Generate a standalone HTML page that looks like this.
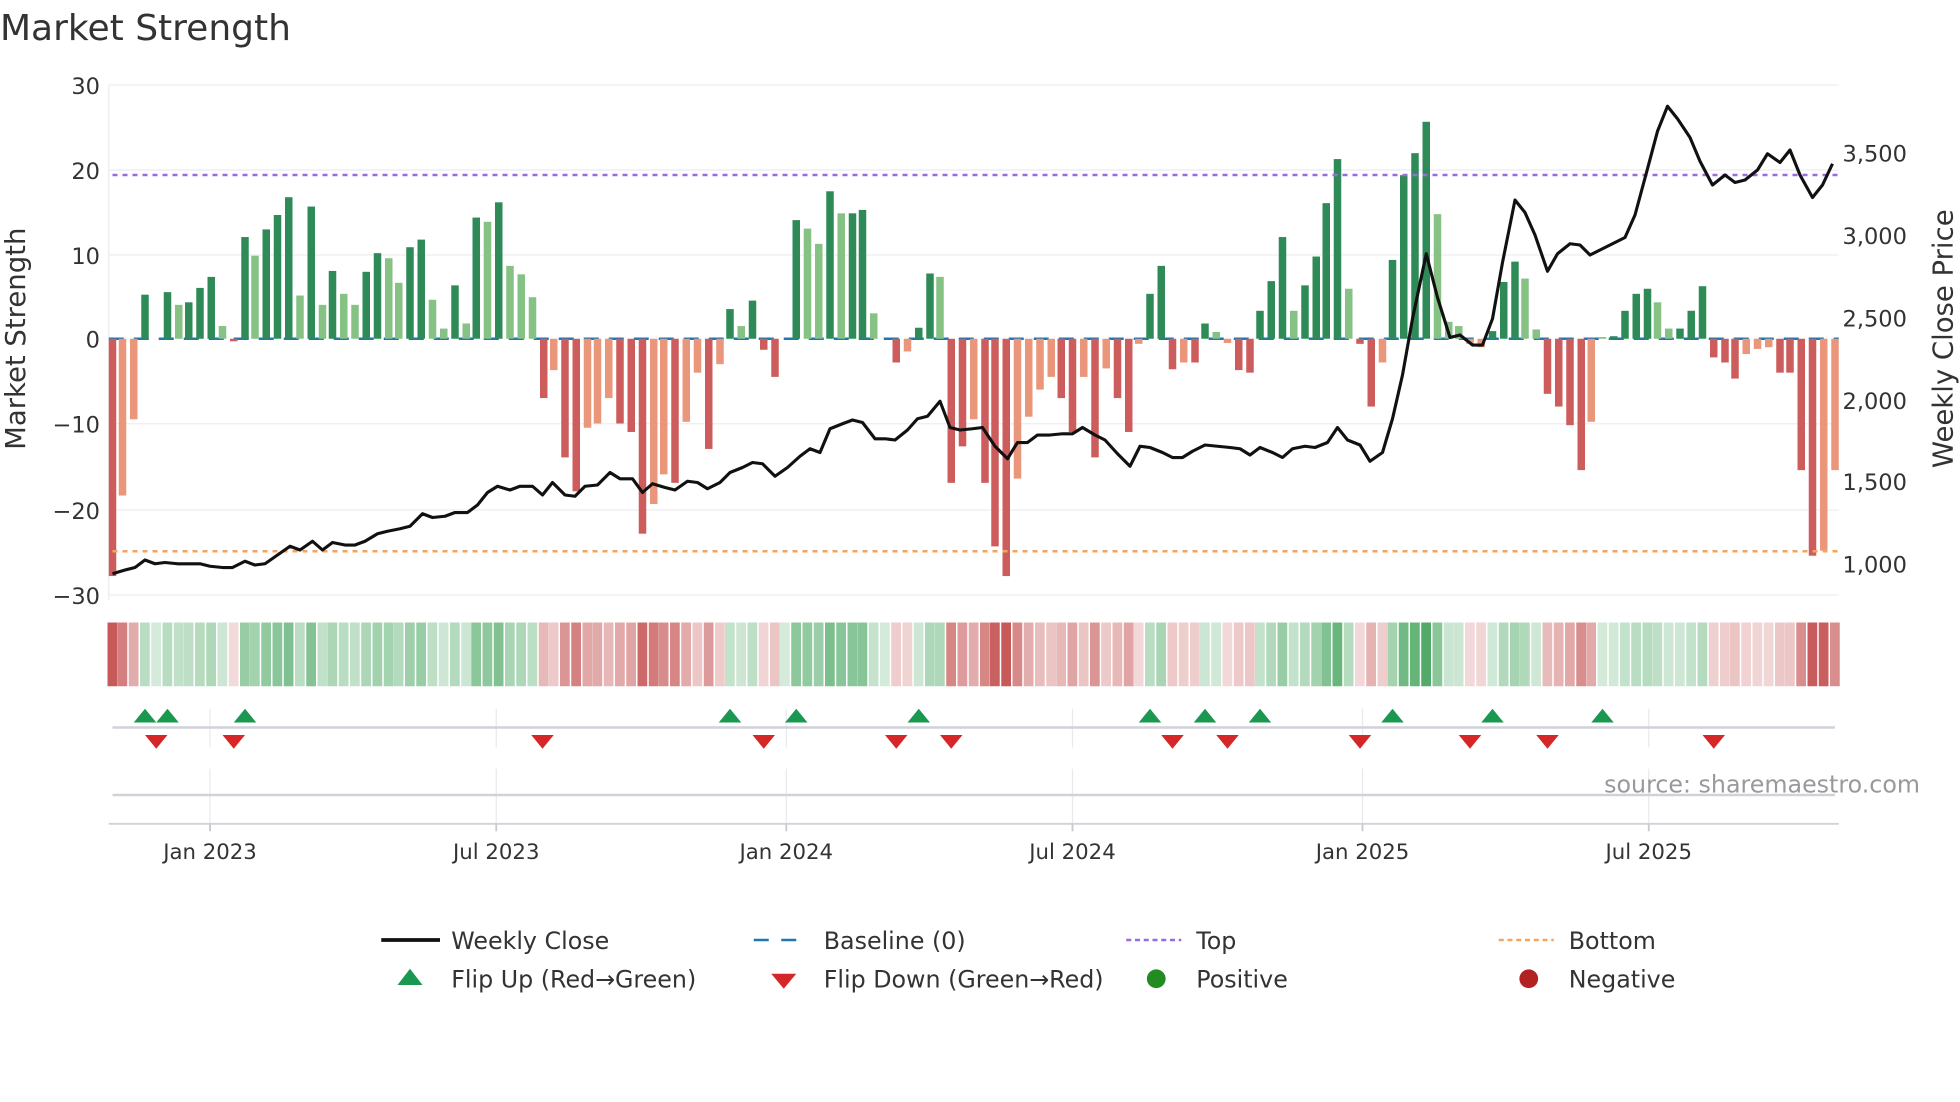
<!DOCTYPE html>
<html><head><meta charset="utf-8"><style>
html,body{margin:0;padding:0;background:#fff;width:1960px;height:1102px;overflow:hidden}
svg{display:block}
text{font-family:"DejaVu Sans","Liberation Sans",sans-serif;fill:#333}
</style></head><body>
<svg id="s" width="1960" height="1102" viewBox="0 0 1568 881.6" xmlns="http://www.w3.org/2000/svg">
<text x="0" y="32" font-size="28.8">Market Strength</text>
<g stroke="#eceef4" stroke-width="1">
<line x1="87" y1="68" x2="1471" y2="68"/><line x1="87" y1="136" x2="1471" y2="136"/><line x1="87" y1="204" x2="1471" y2="204"/>
<line x1="87" y1="339" x2="1471" y2="339"/><line x1="87" y1="408" x2="1471" y2="408"/><line x1="87" y1="476" x2="1471" y2="476"/>
<line x1="87" y1="68" x2="87" y2="480"/>
</g>
<g font-size="18" text-anchor="end">
<text x="80" y="75">30</text><text x="80" y="143">20</text><text x="80" y="211">10</text><text x="80" y="278">0</text>
<text x="80" y="346">−10</text><text x="80" y="415">−20</text><text x="80" y="483">−30</text>
</g>
<g font-size="18">
<text x="1474" y="129">3,500</text><text x="1474" y="195">3,000</text><text x="1474" y="261">2,500</text>
<text x="1474" y="327">2,000</text><text x="1474" y="392">1,500</text><text x="1474" y="458">1,000</text>
</g>
<text font-size="22" text-anchor="middle" transform="translate(20,271) rotate(-90)">Market Strength</text>
<text font-size="22" text-anchor="middle" transform="translate(1562,271) rotate(-90)">Weekly Close Price</text>
<line x1="87" y1="271" x2="1471" y2="271" stroke="#1f77b4" stroke-width="2" stroke-dasharray="12,8"/>
<g id="bars"></g>
<line x1="90" y1="140" x2="1471" y2="140" stroke="#9b6ade" stroke-width="2" stroke-dasharray="4,4"/>
<line x1="90" y1="441" x2="1471" y2="441" stroke="#f4a460" stroke-width="2" stroke-dasharray="4,4"/>
<polyline id="price" fill="none" stroke="#111" stroke-width="2.5" stroke-linejoin="round"/>
<g id="heat"></g>
<g stroke="#e8eaf0" stroke-width="1">
<line x1="168" y1="567" x2="168" y2="598"/><line x1="397" y1="567" x2="397" y2="598"/><line x1="629" y1="567" x2="629" y2="598"/><line x1="858" y1="567" x2="858" y2="598"/><line x1="1090" y1="567" x2="1090" y2="598"/><line x1="1319" y1="567" x2="1319" y2="598"/>
<line x1="168" y1="615" x2="168" y2="659"/><line x1="397" y1="615" x2="397" y2="659"/><line x1="629" y1="615" x2="629" y2="659"/><line x1="858" y1="615" x2="858" y2="659"/><line x1="1090" y1="615" x2="1090" y2="659"/><line x1="1319" y1="615" x2="1319" y2="659"/>
</g>
<line x1="90" y1="582" x2="1468" y2="582" stroke="#d0d2d8" stroke-width="2"/>
<line x1="90" y1="636" x2="1468" y2="636" stroke="#d0d2d8" stroke-width="2"/>
<line x1="87" y1="659" x2="1471" y2="659" stroke="#d0d2d8" stroke-width="1.5"/>
<g stroke="#c8cad0" stroke-width="1.5">
<line x1="168" y1="659" x2="168" y2="665"/><line x1="397" y1="659" x2="397" y2="665"/><line x1="629" y1="659" x2="629" y2="665"/><line x1="858" y1="659" x2="858" y2="665"/><line x1="1090" y1="659" x2="1090" y2="665"/><line x1="1319" y1="659" x2="1319" y2="665"/>
</g>
<g id="flips"></g>
<text x="1536" y="634" font-size="19" text-anchor="end" style="fill:#999">source: sharemaestro.com</text>
<g font-size="17" text-anchor="middle">
<text x="168" y="687">Jan 2023</text><text x="397" y="687">Jul 2023</text><text x="629" y="687">Jan 2024</text>
<text x="858" y="687">Jul 2024</text><text x="1090" y="687">Jan 2025</text><text x="1319" y="687">Jul 2025</text>
</g>
<g font-size="19">
<line x1="305" y1="752" x2="352" y2="752" stroke="#111" stroke-width="3"/><text x="361" y="759">Weekly Close</text>
<line x1="603" y1="752" x2="647" y2="752" stroke="#1f77b4" stroke-width="2" stroke-dasharray="12,10"/><text x="659" y="759">Baseline (0)</text>
<line x1="901" y1="752" x2="945" y2="752" stroke="#9b6ade" stroke-width="2" stroke-dasharray="4,3"/><text x="957" y="759">Top</text>
<line x1="1199" y1="752" x2="1243" y2="752" stroke="#f4a460" stroke-width="2" stroke-dasharray="4,3"/><text x="1255" y="759">Bottom</text>
<polygon points="328,775 338,788 318,788" fill="#1a9850"/><text x="361" y="790">Flip Up (Red→Green)</text>
<polygon points="617,779 637,779 627,791" fill="#d62728"/><text x="659" y="790">Flip Down (Green→Red)</text>
<circle cx="925" cy="783" r="7.5" fill="#228b22"/><text x="957" y="790">Positive</text>
<circle cx="1223" cy="783" r="7.5" fill="#b22222"/><text x="1255" y="790">Negative</text>
</g>
</svg>
<script>
var NS="http://www.w3.org/2000/svg";
function el(t,a,p){var e=document.createElementNS(NS,t);for(var k in a)e.setAttribute(k,a[k]);p.appendChild(e);return e;}
var B=[[90,-28,'dr'],[98,-18.5,'or'],[107,-9.5,'or'],[116,5.2,'dg'],[125,0,'dg'],[134,5.5,'dg'],[143,4,'lg'],[151,4.3,'dg'],[160,6,'dg'],[169,7.3,'dg'],[178,1.5,'lg'],[187,-0.3,'dr'],[196,12,'dg'],[204,9.8,'lg'],[213,12.9,'dg'],[222,14.6,'dg'],[231,16.7,'dg'],[240,5.1,'lg'],[249,15.6,'dg'],[258,4,'lg'],[266,8,'dg'],[275,5.3,'lg'],[284,4,'lg'],[293,7.9,'dg'],[302,10.1,'dg'],[311,9.5,'lg'],[319,6.6,'lg'],[328,10.8,'dg'],[337,11.7,'dg'],[346,4.6,'lg'],[355,1.2,'lg'],[364,6.3,'dg'],[373,1.8,'lg'],[381,14.3,'dg'],[390,13.8,'lg'],[399,16.1,'dg'],[408,8.6,'lg'],[417,7.6,'lg'],[426,4.9,'lg'],
[435,-7,'dr'],[443,-3.7,'or'],[452,-14,'dr'],[461,-18,'dr'],[470,-10.5,'or'],[478,-10,'or'],[487,-7,'or'],[496,-10,'dr'],[505,-11,'dr'],[514,-23,'dr'],[523,-19.5,'or'],[531,-16,'or'],[540,-17,'dr'],[549,-9.8,'or'],[558,-4,'or'],[567,-13,'dr'],[576,-3,'or'],[584,3.5,'dg'],[593,1.5,'lg'],[602,4.5,'dg'],[611,-1.3,'dr'],[620,-4.5,'dr'],[628,0,'dg'],[637,14,'dg'],[646,13,'lg'],[655,11.2,'lg'],[664,17.4,'dg'],[673,14.8,'lg'],[682,14.8,'dg'],[690,15.2,'dg'],[699,3,'lg'],[708,0,'dr'],[717,-2.8,'dr'],[726,-1.5,'or'],[735,1.3,'dg'],[744,7.7,'dg'],[752,7.3,'lg'],
[761,-17,'dr'],[770,-12.7,'dr'],[779,-9.5,'or'],[788,-17,'dr'],[796,-24.5,'dr'],[805,-28,'dr'],[814,-16.5,'or'],[823,-9.2,'or'],[832,-6,'or'],[841,-4.5,'or'],[849,-7,'dr'],[858,-11,'dr'],[867,-4.5,'or'],[876,-14,'dr'],[885,-3.5,'or'],[894,-7,'dr'],[903,-11,'dr'],[911,-0.6,'or'],[920,5.3,'dg'],[929,8.6,'dg'],[938,-3.6,'dr'],[947,-2.8,'or'],[956,-2.8,'dr'],[964,1.8,'dg'],[973,0.8,'lg'],[982,-0.5,'or'],[991,-3.7,'dr'],[1000,-4,'dr'],[1008,3.3,'dg'],[1017,6.8,'dg'],[1026,12,'dg'],[1035,3.3,'lg'],[1044,6.3,'dg'],[1053,9.7,'dg'],[1061,16,'dg'],[1070,21.2,'dg'],[1079,5.9,'lg'],[1088,-0.6,'dr'],[1097,-8,'dr'],[1106,-2.8,'or'],[1114,9.3,'dg'],[1123,19.3,'dg'],[1132,21.9,'dg'],[1141,25.6,'dg'],[1150,14.7,'lg'],[1159,2,'lg'],[1167,1.5,'lg'],[1176,-0.6,'or'],[1185,-1,'or'],[1194,0.9,'dg'],[1203,6.7,'dg'],[1212,9.1,'dg'],[1220,7.1,'lg'],[1229,1.1,'lg'],[1238,-6.5,'dr'],[1247,-8,'dr'],[1256,-10.2,'dr'],[1265,-15.5,'dr'],[1273,-9.8,'or'],[1282,0.2,'lg'],[1291,0.3,'dg'],[1300,3.3,'dg'],[1309,5.3,'dg'],[1318,5.9,'dg'],[1326,4.3,'lg'],[1335,1.2,'lg'],[1344,1.2,'dg'],[1353,3.3,'dg'],[1362,6.2,'dg'],[1371,-2.2,'dr'],[1380,-2.8,'dr'],[1388,-4.7,'dr'],[1397,-1.8,'or'],[1406,-1.2,'or'],[1415,-1,'or'],[1424,-4,'dr'],[1432,-4,'dr'],[1441,-15.5,'dr'],[1450,-25.6,'dr'],[1459,-25,'or'],[1468,-15.5,'or']];
var C={dg:'#2e8b57',lg:'#86c283',dr:'#cd5c5c',or:'#e9967a'};
var g=document.getElementById('bars'),h=document.getElementById('heat');
B.forEach(function(b){var v=b[1],y0=271,y1=271-6.78*v;
 if(Math.abs(v)>0.05)el('rect',{x:b[0]-3,y:Math.min(y0,y1),width:6,height:Math.abs(y1-y0),fill:C[b[2]]},g);
 var t=Math.min(1,Math.abs(v)/26),col;
 if(v>=0||b[2]=='dg'||b[2]=='lg'){col='rgba(60,160,85,'+(0.22+0.68*t)+')';}else{col='rgba(195,75,75,'+(0.2+0.72*t)+')';}
 el('rect',{x:b[0]-4,y:498,width:7.8,height:51,fill:col},h);
});
var P=[90,459,100,456,108,454,116,448,124,451,132,450,142,451,150,451,160,451,168,453,178,454,186,454,196,449,204,452,212,451,222,444,232,437,240,440,250,433,258,440,266,434,276,436,284,436,292,433,302,427,310,425,320,423,328,421,338,411,346,414,356,413,364,410,374,410,382,404,390,394,398,389,408,392,416,389,426,389,434,396,442,386,452,396,460,397,468,389,478,388,488,378,496,383,506,383,514,394,522,387,532,390,540,392,550,385,558,386,566,391,576,386,584,378,594,374,602,370,610,371,620,381,630,374,640,365,648,359,656,362,664,343,674,339,682,336,690,338,700,351,708,351,716,352,726,344,734,335,742,333,752,321,760,342,768,344,778,343,786,342,796,357,806,367,814,354,822,354,830,348,840,348,850,347,858,347,866,342,876,348,884,352,894,363,904,373,912,357,920,358,930,362,938,366,946,366,954,361,964,356,974,357,984,358,992,359,1000,364,1008,358,1018,362,1026,366,1034,359,1044,357,1052,358,1062,354,1070,342,1078,352,1088,356,1096,369,1106,362,1114,335,1122,300,1130,255,1141,203,1150,238,1160,270,1168,268,1178,276,1186,276,1194,255,1202,210,1212,160,1220,170,1228,188,1238,217,1246,203,1256,195,1264,196,1272,204,1282,199,1290,195,1300,190,1308,172,1318,135,1326,105,1334,85,1342,95,1352,110,1360,129,1370,148,1380,140,1388,146,1396,144,1406,136,1414,123,1424,130,1432,120,1440,140,1450,158,1458,148,1466,131];
var s='';for(var i=0;i<P.length;i+=2)s+=P[i]+','+P[i+1]+' ';document.getElementById('price').setAttribute('points',s);
var f=document.getElementById('flips');
[116,134,196,584,637,735,920,964,1008,1114,1194,1282].forEach(function(x){el('polygon',{points:(x)+',567 '+(x+9)+',578 '+(x-9)+',578',fill:'#1a9850'},f);});
[125,187,434,611,717,761,938,982,1088,1176,1238,1371].forEach(function(x){el('polygon',{points:(x-9)+',588 '+(x+9)+',588 '+x+',599',fill:'#d62728'},f);});
</script>
</body></html>
